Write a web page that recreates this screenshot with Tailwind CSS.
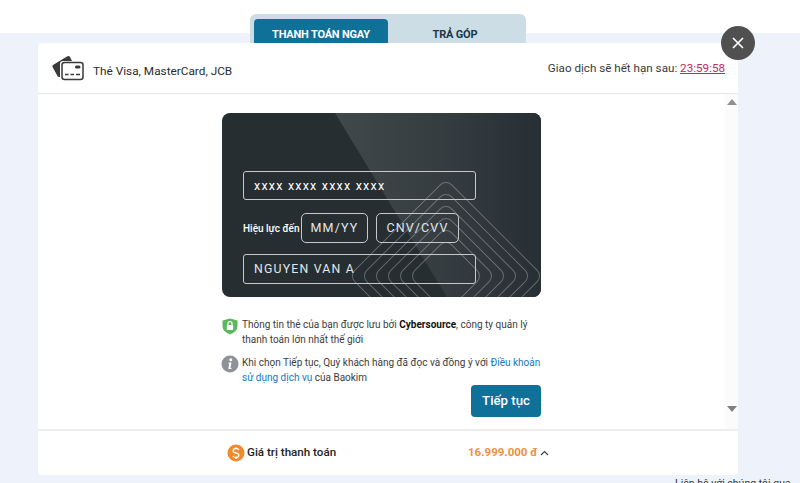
<!DOCTYPE html>
<html lang="en">
<head>
  <meta charset="UTF-8" />
  <title>Thanh toán</title>
  <script src="https://cdn.jsdelivr.net/npm/@tailwindcss/browser@4"></script>
</head>
<body class="bg-white font-['Roboto',sans-serif] overflow-hidden">
  <div class="relative w-[800px] h-[483px] overflow-hidden">
    <!-- page band behind the modal -->
    <div class="absolute left-0 right-0 top-[33px] bottom-0 bg-[#eef3fb]"></div>

    <div class="relative w-[700px] ml-[38px] pt-[14px]">
      <!-- tabs -->
      <div class="w-[276px] h-[29px] mx-auto bg-[#cddde6] rounded-t-[6px] pl-[4px] pt-[5px] flex">
        <div class="w-[134px] h-[24px] bg-[#0f7098] rounded-t-[4px] text-white text-[11px] tracking-[-0.2px] font-bold flex items-start justify-center pt-[9px] leading-[13px]">THANH TOÁN NGAY</div>
        <div class="w-[134px] h-[24px] text-[#17394d] text-[11px] tracking-[-0.2px] font-bold flex items-start justify-center pt-[9px] leading-[13px]">TRẢ GÓP</div>
      </div>

      <!-- modal -->
      <div class="bg-white rounded-[4px] h-[432px] flex flex-col">
        <div class="h-[51px] shrink-0 border-b border-[#e4e7ea] flex items-center justify-between pl-[14px] pr-[13px]">
          <div class="flex items-center gap-[9px]">
            <svg width="32" height="26" viewBox="0 0 32 26">
              <path d="M1 10 L15 1.500 Q17 0.500 18 2 L20 6 L11 6 Q8 6 8 9 L8 22 L7 22 Q6 22 5.500 21 L0.500 12 Q0.200 11 1 10Z" fill="#3a3a3a"/>
              <rect x="10" y="7.500" width="21" height="17" rx="2.500" fill="#fff" stroke="#3a3a3a" stroke-width="1.500"/>
              <rect x="23" y="10.500" width="5.500" height="3" rx="1.500" fill="#3a3a3a"/>
              <path d="M13 19.500 H16.500 M18.500 19.500 H22 M24 19.500 H28" stroke="#3a3a3a" stroke-width="1.500"/>
            </svg>
            <span class="text-[11.800px] text-[#2b2b2b] mt-[7px]">Thẻ Visa, MasterCard, JCB</span>
          </div>
          <div class="text-[11.650px] text-[#3a3a3a] mt-[2px]">Giao dịch sẽ hết hạn sau: <span class="text-[#c2275a] underline">23:59:58</span></div>
        </div>

        <div class="relative flex-1 pt-[19px]">
          <!-- scrollbar -->
          <div class="absolute right-0 top-0 bottom-0 w-[13px] bg-[#fbfbfb] flex flex-col items-center justify-between pt-[5px] pb-[17px]">
            <svg width="10" height="6" viewBox="0 0 10 6"><path d="M5 0 L10 6 H0Z" fill="#909090"/></svg>
            <svg width="10" height="6" viewBox="0 0 10 6"><path d="M0 0 H10 L5 6Z" fill="#808080"/></svg>
          </div>

          <div class="w-[319px] ml-[184px]">
            <!-- card -->
            <div class="relative w-[319px] h-[184px] rounded-[8px] overflow-hidden bg-[#262e32] pt-[58px] pl-[21px] text-white">
              <svg class="absolute inset-0" width="319" height="184" viewBox="0 0 319 184">
                <defs>
                  <linearGradient id="sheen" x1="0" y1="0" x2="1" y2="0">
                    <stop offset="0" stop-color="#40484b"/>
                    <stop offset="0.55" stop-color="#353c40"/>
                    <stop offset="1" stop-color="#282f34"/>
                  </linearGradient>
                </defs>
                <path d="M113 0 H319 V184 H225 Z" fill="url(#sheen)"/>
                <g fill="none" stroke="#fff" stroke-opacity="0.28" transform="rotate(45 224 163)">
                  <rect x="155.500" y="94.500" width="137" height="137" rx="8"/>
                  <rect x="164" y="103" width="120" height="120" rx="8"/>
                  <rect x="172.500" y="111.500" width="103" height="103" rx="8"/>
                  <rect x="181" y="120" width="86" height="86" rx="8"/>
                  <rect x="189.500" y="128.500" width="69" height="69" rx="8"/>
                  <rect x="198" y="137" width="52" height="52" rx="8"/>
                </g>
              </svg>

              <div class="relative flex flex-col">
                <div class="w-[233px] h-[29px] border border-[#c5c9cb] rounded-[3px] pl-[10px] pt-[1px] flex items-center text-[12.500px] tracking-[1.200px]">xxxx xxxx xxxx xxxx</div>
                <div class="flex items-center h-[30px] mt-[13px]">
                  <span class="w-[58px] text-[10px] font-medium whitespace-nowrap">Hiệu lực đến</span>
                  <div class="w-[67px] h-[30px] border border-[#c5c9cb] rounded-[5px] flex items-center justify-center text-[12.500px] tracking-[1.200px] text-[#e4e6e7]">MM/YY</div>
                  <div class="w-[83px] h-[30px] ml-[8px] border border-[#c5c9cb] rounded-[5px] flex items-center justify-center text-[12.500px] tracking-[1.100px] text-[#e4e6e7]">CNV/CVV</div>
                </div>
                <div class="w-[233px] h-[30px] mt-[11px] border border-[#c5c9cb] rounded-[3px] pl-[10px] flex items-center text-[12.300px] tracking-[1.200px] text-[#e4e6e7]">NGUYEN VAN A</div>
              </div>
            </div>

            <!-- notes -->
            <div class="mt-[20px] flex gap-[3px] text-[10px] leading-[15px] text-[#3c3c3c]">
              <svg class="shrink-0 mt-[1px] -ml-[1px]" width="18" height="17" viewBox="0 0 18 17">
                <path d="M9 0.500 L16.500 2.500 V8 Q16.500 13.500 9 16.500 Q1.500 13.500 1.500 8 V2.500Z" fill="#5cb85c"/>
                <rect x="5.800" y="7" width="6.400" height="5" rx="0.800" fill="#fff"/>
                <path d="M7 7 V5.500 Q7 3.700 9 3.700 Q11 3.700 11 5.500 V7" fill="none" stroke="#fff" stroke-width="1.200"/>
              </svg>
              <p class="w-[296px]">Thông tin thẻ của bạn được lưu bởi <b class="text-[#111] font-bold">Cybersource</b>, công ty quản lý thanh toán lớn nhất thế giới</p>
            </div>
            <div class="mt-[8px] flex gap-[3px] text-[10px] leading-[15px] text-[#3c3c3c]">
              <svg class="shrink-0 -ml-[1px]" width="18" height="18" viewBox="0 0 18 18">
                <circle cx="9" cy="9" r="8.500" fill="#8f9296"/>
                <circle cx="9.800" cy="4.700" r="1.500" fill="#fff"/>
                <path d="M7.500 7.500 H10.500 L9.500 13 H10.500 L10.300 14 H7.300 L8.300 8.500 H7.300Z" fill="#fff"/>
              </svg>
              <p class="w-[302px]">Khi chọn Tiếp tục, Quý khách hàng đã đọc và đồng ý với <span class="text-[#1577c2]">Điều khoản sử dụng dịch vụ</span> của Baokim</p>
            </div>
            <div class="flex justify-end">
              <div class="w-[70px] h-[32px] rounded-[4px] bg-[#0f7098] text-white text-[13.200px] font-medium flex items-center justify-center">Tiếp tục</div>
            </div>
          </div>
        </div>

        <!-- footer -->
        <div class="h-[46px] shrink-0 border-t-2 border-[#eceef0] flex items-center pl-[189px]">
          <svg width="18" height="18" viewBox="0 0 18 18" class="shrink-0">
            <circle cx="9" cy="9" r="8.500" fill="#f08a2c"/>
            <path d="M12 6 Q11 4.500 9 4.500 Q6.200 4.500 6.200 6.700 Q6.200 8.500 9 9 Q11.800 9.500 11.800 11.300 Q11.800 13.500 9 13.500 Q7 13.500 6 12 M9 3 V4.500 M9 13.500 V15" fill="none" stroke="#fff" stroke-width="1.300"/>
          </svg>
          <span class="ml-[2px] w-[221px] text-[11.600px] font-medium text-[#222]">Giá trị thanh toán</span>
          <span class="text-[11.500px] font-bold text-[#ec9140]">16.999.000 đ</span>
          <svg class="ml-[2px]" width="9" height="6" viewBox="0 0 9 6"><path d="M1 5 L4.500 1.500 L8 5" fill="none" stroke="#444" stroke-width="1.200"/></svg>
        </div>
      </div>
    </div>

    <p class="absolute left-[675px] top-[476px] text-[10.500px] text-[#333] whitespace-nowrap">Liên hệ với chúng tôi qua</p>

    <!-- close button -->
    <div class="absolute left-[721px] top-[26px] w-[34px] h-[34px] rounded-full bg-[#505050] flex items-center justify-center">
      <svg width="12" height="12" viewBox="0 0 12 12"><path d="M1 1 L11 11 M11 1 L1 11" stroke="#fff" stroke-width="1.700"/></svg>
    </div>
  </div>
</body>
</html>
